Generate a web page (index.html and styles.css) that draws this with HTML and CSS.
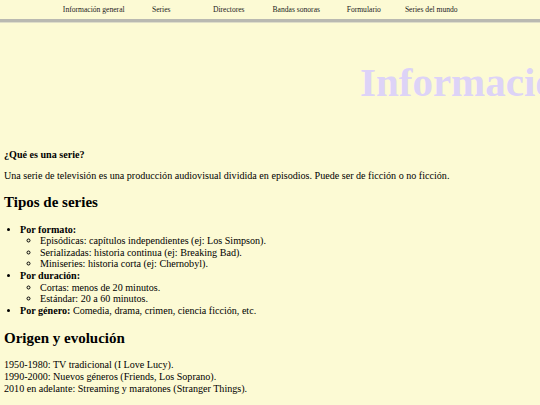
FILE: index.html
```html
<!DOCTYPE html>
<html lang="es">
<head>
<meta charset="utf-8">
<title>Series</title>
<link rel="stylesheet" href="styles.css">
</head>
<body>
<nav class="nav">
  <a class="nav-item" href="#">Información general</a>
  <a class="nav-item" href="#">Series</a>
  <a class="nav-item" href="#">Directores</a>
  <a class="nav-item" href="#">Bandas sonoras</a>
  <a class="nav-item" href="#">Formulario</a>
  <a class="nav-item" href="#">Series del mundo</a>
</nav>
<header class="hero">
  <h1 class="hero-title">Información general</h1>
</header>
<main class="content">
  <h4 class="q">¿Qué es una serie?</h4>
  <p class="para">Una serie de televisión es una producción audiovisual dividida en episodios. Puede ser de ficción o no ficción.</p>
  <h2 class="sec">Tipos de series</h2>
  <ul class="list">
    <li><b>Por formato:</b>
      <ul class="sublist">
        <li>Episódicas: capítulos independientes (ej: Los Simpson).</li>
        <li>Serializadas: historia continua (ej: Breaking Bad).</li>
        <li>Miniseries: historia corta (ej: Chernobyl).</li>
      </ul>
    </li>
    <li><b>Por duración:</b>
      <ul class="sublist">
        <li>Cortas: menos de 20 minutos.</li>
        <li>Estándar: 20 a 60 minutos.</li>
      </ul>
    </li>
    <li><b>Por género:</b> Comedia, drama, crimen, ciencia ficción, etc.</li>
  </ul>
  <h2 class="sec sec-2">Origen y evolución</h2>
  <p class="para">1950-1980: TV tradicional (I Love Lucy).<br>1990-2000: Nuevos géneros (Friends, Los Soprano).<br>2010 en adelante: Streaming y maratones (Stranger Things).</p>
</main>
</body>
</html>
```
FILE: styles.css
```css
html, body {
  margin: 0;
  padding: 0;
}
body {
  background: #fcfad4;
  color: #000;
  font-family: "Liberation Serif", "Times New Roman", serif;
  font-size: 10.1px;
  line-height: 1.15;
  overflow: hidden;
}
.nav {
  display: flex;
  height: 19px;
  align-items: center;
  padding-left: 60px;
  border-bottom: 3px solid #b9b9b1;
  box-shadow: 0 1px 0 #deddc8;
  line-height: normal;
}
.nav-item {
  width: 67.5px;
  flex: none;
  text-align: center;
  white-space: nowrap;
  font-size: 7.6px;
  color: #222;
  text-decoration: none;
}
.hero {
  overflow: hidden;
  white-space: nowrap;
  padding-left: 360px;
  margin-top: 35.5px;
}
.hero-title {
  margin: 0;
  font-size: 41px;
  line-height: normal;
  font-weight: bold;
  color: #ddd3f7;
}
.content {
  padding: 0 4px;
  margin-top: 43px;
}
.q {
  font-size: 10.1px;
  font-weight: bold;
  margin: 0 0 10px;
}
.para {
  margin: 10px 0;
}
.sec {
  font-size: 15px;
  line-height: normal;
  font-weight: bold;
  margin: 12.5px 0;
}
.sec-2 {
  margin-top: 13.5px;
}
.list {
  margin: 10px 0;
  padding-left: 16px;
}
.sublist {
  margin: 0;
  padding-left: 20px;
  list-style-type: circle;
}
```
